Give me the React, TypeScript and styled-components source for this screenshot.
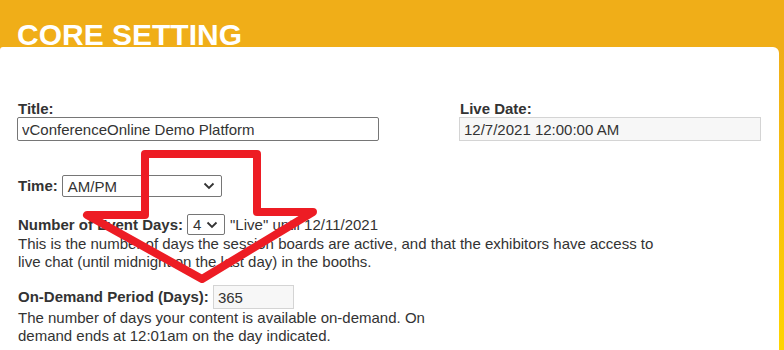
import React from "react";
import styled, { createGlobalStyle } from "styled-components";

const GlobalStyle = createGlobalStyle`
  html, body { margin: 0; padding: 0; }
  body {
    background: linear-gradient(180deg, #f0ae18 0px, #f0ae18 50px, #ffd500 350px);
    font-family: "Liberation Sans", Arial, sans-serif;
    color: #333;
  }
`;

const Page = styled.div`
  position: relative;
  width: 784px;
  height: 350px;
  overflow: hidden;
`;

const Header = styled.div`
  height: 47px;
  box-sizing: border-box;
  padding: 20px 0 0 17px;
`;

const Heading = styled.h1`
  margin: 0;
  font-size: 30px;
  line-height: 30px;
  font-weight: 700;
  color: #ffffff;
`;

const Panel = styled.div`
  width: 779px;
  height: 303px;
  box-sizing: border-box;
  background: #ffffff;
  border-radius: 3px 6px 0 0;
  padding: 54px 0 0 17px;
`;

const TopRow = styled.div`
  display: flex;
  gap: 80px;
`;

const Field = styled.div<{ $w: number }>`
  width: ${(p) => p.$w}px;
  display: flex;
  flex-direction: column;
`;

const Label = styled.label`
  display: block;
  font-size: 15px;
  line-height: 16px;
  font-weight: 700;
  color: #333;
  padding-left: 1px;
`;

const TextInput = styled.input<{ $ro?: boolean; $w?: number }>`
  box-sizing: border-box;
  width: ${(p) => (p.$w ? `${p.$w}px` : "100%")};
  height: 24px;
  margin: 0;
  padding: 0 4px;
  font-family: "Liberation Sans", Arial, sans-serif;
  font-size: 15px;
  color: #333;
  background: ${(p) => (p.$ro ? "#f7f7f7" : "#ffffff")};
  border: 1px solid ${(p) => (p.$ro ? "#d4d4d4" : "#767676")};
  border-radius: ${(p) => (p.$ro ? "0" : "2px")};
  outline: none;
`;

const InlineRow = styled.div<{ $mt: number }>`
  display: flex;
  align-items: center;
  margin-top: ${(p) => p.$mt}px;
  font-size: 15px;
  color: #333;
`;

const InlineLabel = styled(Label)`
  display: inline;
  margin-right: 4px;
`;

const SelectBox = styled.div<{ $w: number; $h: number }>`
  position: relative;
  box-sizing: border-box;
  width: ${(p) => p.$w}px;
  height: ${(p) => p.$h}px;
  border: 1px solid #767676;
  border-radius: 2px;
  display: flex;
  align-items: center;
  padding-left: 5px;
  font-size: 15px;
  color: #333;
  background: #fff;
`;

const Chevron = styled.svg`
  position: absolute;
  right: 6px;
  top: 50%;
  width: 12px;
  height: 8px;
  margin-top: -4px;
`;

const After = styled.span`
  margin-left: 5px;
`;

const Desc = styled.p<{ $w: number }>`
  margin: 0;
  width: ${(p) => p.$w}px;
  font-size: 15px;
  line-height: 18px;
  color: #333;
  padding-left: 1px;
`;

const Arrow = styled.svg`
  position: absolute;
  left: 0;
  top: 0;
  pointer-events: none;
`;

const Select: React.FC<{ value: string; w: number; h: number }> = ({ value, w, h }) => (
  <SelectBox $w={w} $h={h}>
    {value}
    <Chevron viewBox="0 0 12 8">
      <path d="M1.5 1.5 L6 6 L10.5 1.5" fill="none" stroke="#333" strokeWidth="1.8" />
    </Chevron>
  </SelectBox>
);

export default function App() {
  return (
    <>
      <GlobalStyle />
      <Page>
        <Header>
          <Heading>CORE SETTING</Heading>
        </Header>
        <Panel>
          <TopRow>
            <Field $w={362}>
              <Label>Title:</Label>
              <TextInput defaultValue="vConferenceOnline Demo Platform" />
            </Field>
            <Field $w={302}>
              <Label>Live Date:</Label>
              <TextInput $ro readOnly defaultValue="12/7/2021 12:00:00 AM" />
            </Field>
          </TopRow>
          <InlineRow $mt={34}>
            <InlineLabel>Time:</InlineLabel>
            <Select value="AM/PM" w={160} h={22} />
          </InlineRow>
          <InlineRow $mt={17}>
            <InlineLabel>Number of Event Days:</InlineLabel>
            <Select value="4" w={38} h={21} />
            <After>"Live" until 12/11/2021</After>
          </InlineRow>
          <Desc $w={645}>
            This is the number of days the session boards are active, and that the exhibitors have access to live chat (until midnight on the last day) in the booths.
          </Desc>
          <InlineRow $mt={14}>
            <InlineLabel>On-Demand Period (Days):</InlineLabel>
            <TextInput $ro readOnly $w={81} defaultValue="365" />
          </InlineRow>
          <Desc $w={425}>
            The number of days your content is available on-demand. On demand ends at 12:01am on the day indicated.
          </Desc>
        </Panel>
        <Arrow width="784" height="350" viewBox="0 0 784 350">
          <polygon
            points="145,154 257,154 257,212 313,212 202,279 87,215 145,215"
            fill="none"
            stroke="#ed1c24"
            strokeWidth="8"
            strokeLinejoin="round"
          />
        </Arrow>
      </Page>
    </>
  );
}
